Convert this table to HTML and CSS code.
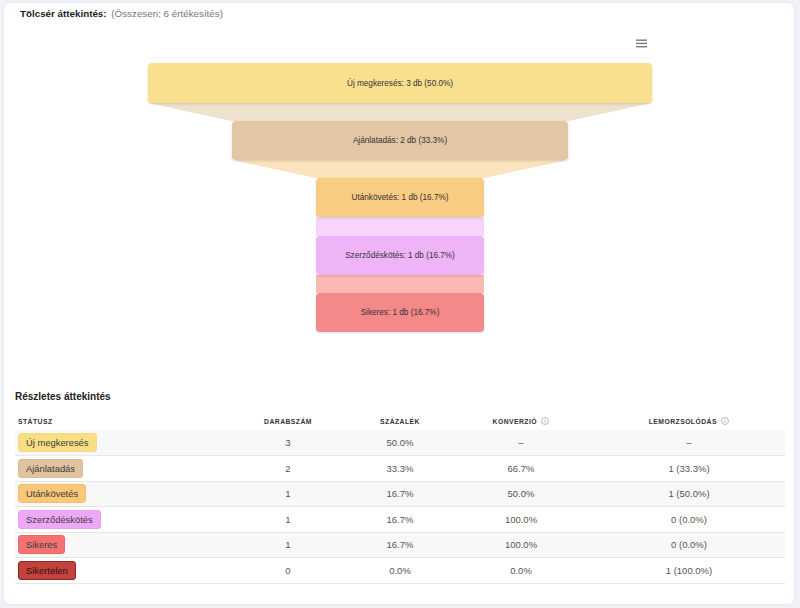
FILE: index.html
```html
<!DOCTYPE html>
<html lang="hu">
<head>
<meta charset="utf-8">
<title>Tölcsér áttekintés</title>
<link rel="stylesheet" href="styles.css">
</head>
<body>
<div class="card">
  <div class="title"><strong>Tölcsér áttekintés:</strong> <span class="muted">(Összesen: 6 értékesítés)</span></div>

  <div class="chart">
    <button class="menu" aria-label="menu">
      <svg width="11" height="9" viewBox="0 0 11 9"><rect x="0" y="0.5" width="11" height="1.3" fill="#6e7079"/><rect x="0" y="3.8" width="11" height="1.3" fill="#6e7079"/><rect x="0" y="7.1" width="11" height="1.3" fill="#6e7079"/></svg>
    </button>
    <div class="funnel">
      <div class="bar c1" style="width:504px">Új megkeresés: 3 db (50.0%)</div>
      <svg class="link" width="504" height="18" viewBox="0 0 504 18" preserveAspectRatio="none"><polygon points="0,0 504,0 420,18 84,18" fill="#efe2cd"/></svg>
      <div class="bar c2" style="width:336px">Ajánlatadás: 2 db (33.3%)</div>
      <svg class="link" width="336" height="18" viewBox="0 0 336 18" preserveAspectRatio="none"><polygon points="0,0 336,0 252,18 84,18" fill="#fbe3bc"/></svg>
      <div class="bar c3" style="width:168px">Utánkövetés: 1 db (16.7%)</div>
      <svg class="link" width="168" height="19" viewBox="0 0 168 19" preserveAspectRatio="none"><polygon points="0,0 168,0 168,19 0,19" fill="#f9d4fb"/></svg>
      <div class="bar c4" style="width:168px">Szerződéskötés: 1 db (16.7%)</div>
      <svg class="link" width="168" height="18" viewBox="0 0 168 18" preserveAspectRatio="none"><polygon points="0,0 168,0 168,18 0,18" fill="#fbb9b6"/></svg>
      <div class="bar c5" style="width:168px">Sikeres: 1 db (16.7%)</div>
    </div>
  </div>

  <h2 class="section">Részletes áttekintés</h2>
  <table class="details">
    <colgroup>
      <col class="w1"><col class="w2"><col class="w3"><col class="w4"><col class="w5">
    </colgroup>
    <thead>
      <tr>
        <th class="left">Státusz</th>
        <th>Darabszám</th>
        <th>Százalék</th>
        <th>Konverzió <svg class="info" width="8" height="8" viewBox="0 0 8 8"><circle cx="4" cy="4" r="3.5" fill="none" stroke="#9a9a9a" stroke-width="0.7"/><rect x="3.65" y="3.4" width="0.7" height="2.6" fill="#9a9a9a"/><circle cx="4" cy="2.3" r="0.45" fill="#9a9a9a"/></svg></th>
        <th>Lemorzsolódás <svg class="info" width="8" height="8" viewBox="0 0 8 8"><circle cx="4" cy="4" r="3.5" fill="none" stroke="#9a9a9a" stroke-width="0.7"/><rect x="3.65" y="3.4" width="0.7" height="2.6" fill="#9a9a9a"/><circle cx="4" cy="2.3" r="0.45" fill="#9a9a9a"/></svg></th>
      </tr>
    </thead>
    <tbody>
      <tr class="alt">
        <td class="left"><span class="badge b1">Új megkeresés</span></td>
        <td>3</td><td>50.0%</td><td>–</td><td>–</td>
      </tr>
      <tr>
        <td class="left"><span class="badge b2">Ajánlatadás</span></td>
        <td>2</td><td>33.3%</td><td>66.7%</td><td>1 (33.3%)</td>
      </tr>
      <tr class="alt">
        <td class="left"><span class="badge b3">Utánkövetés</span></td>
        <td>1</td><td>16.7%</td><td>50.0%</td><td>1 (50.0%)</td>
      </tr>
      <tr>
        <td class="left"><span class="badge b4">Szerződéskötés</span></td>
        <td>1</td><td>16.7%</td><td>100.0%</td><td>0 (0.0%)</td>
      </tr>
      <tr class="alt">
        <td class="left"><span class="badge b5">Sikeres</span></td>
        <td>1</td><td>16.7%</td><td>100.0%</td><td>0 (0.0%)</td>
      </tr>
      <tr>
        <td class="left"><span class="badge b6">Sikertelen</span></td>
        <td>0</td><td>0.0%</td><td>0.0%</td><td>1 (100.0%)</td>
      </tr>
    </tbody>
  </table>
</div>
</body>
</html>
```

FILE: styles.css
```css
* { box-sizing: border-box; }

html, body {
  margin: 0;
  background: #f1f2f7;
}

body {
  padding: 3px 6px 4px 4px;
  font-family: "Liberation Sans", Arial, Helvetica, sans-serif;
  color: #333;
}

.card {
  background: #fff;
  border-radius: 6px;
  box-shadow: 0 0 3px rgba(0, 0, 0, 0.08);
  height: 601px;
  padding: 4px 9px 0 11px;
}

.title {
  padding-left: 5px;
  font-size: 9.8px;
  line-height: 14px;
  color: #222;
}

.title strong {
  font-weight: bold;
  margin-right: 2px;
}

.muted {
  color: #777;
}

.chart {
  position: relative;
  padding-top: 42px;
  height: 368px;
}

.menu {
  position: absolute;
  top: 18px;
  left: 621px;
  border: 0;
  background: none;
  padding: 0;
  width: 11px;
  height: 9px;
  line-height: 0;
}

.funnel {
  display: flex;
  flex-direction: column;
  align-items: center;
}

.bar {
  height: 39px;
  border-radius: 4px;
  display: flex;
  align-items: center;
  justify-content: center;
  font-size: 8.2px;
  color: #333;
  box-shadow: 0 1px 3px rgba(0, 0, 0, 0.13);
  position: relative;
  z-index: 1;
}

.bar.c1 { background: #f8e08e; height: 40px; }
.bar.c2 { background: #e2c7a5; }
.bar.c3 { background: #f8cc82; }
.bar.c4 { background: #efb3f8; }
.bar.c5 { background: #f5898a; }

.link {
  display: block;
}

.section {
  margin: 0;
  font-size: 10px;
  font-weight: 600;
  line-height: 16px;
  color: #222;
}

.details {
  margin-top: 7px;
  width: 770px;
  border-collapse: collapse;
  table-layout: fixed;
}

.w1 { width: 210px; }
.w2 { width: 126px; }
.w3 { width: 98px; }
.w4 { width: 144px; }
.w5 { width: 192px; }

.details th {
  height: 18px;
  padding: 0;
  font-size: 6.8px;
  font-weight: bold;
  letter-spacing: 0.45px;
  text-transform: uppercase;
  color: #333;
  text-align: center;
  vertical-align: middle;
}

.details th .info {
  vertical-align: -1px;
  margin-left: 2px;
}

.details td {
  height: 25.5px;
  padding: 0;
  font-size: 9.5px;
  color: #555;
  text-align: center;
  vertical-align: middle;
  border-bottom: 1px solid #e6e6e6;
}

.details .left {
  text-align: left;
  padding-left: 3px;
}

.details tr.alt td {
  background: #f8f8f8;
}

.badge {
  display: inline-block;
  height: 19px;
  line-height: 17px;
  padding: 0 7px;
  border-radius: 3px;
  font-size: 9.4px;
  color: #3d3d3d;
  border: 1px solid transparent;
}

.b1 { background: #f8df84; border-color: #f3d97f; }
.b2 { background: #e0c39f; border-color: #d9bb96; }
.b3 { background: #f8c878; border-color: #f2c170; }
.b4 { background: #eea8f8; border-color: #e7a0f2; }
.b5 { background: #f47171; border-color: #ee6767; }
.b6 { background: #c0433d; border-color: #8e2622; color: #3a0c0a; }
```
